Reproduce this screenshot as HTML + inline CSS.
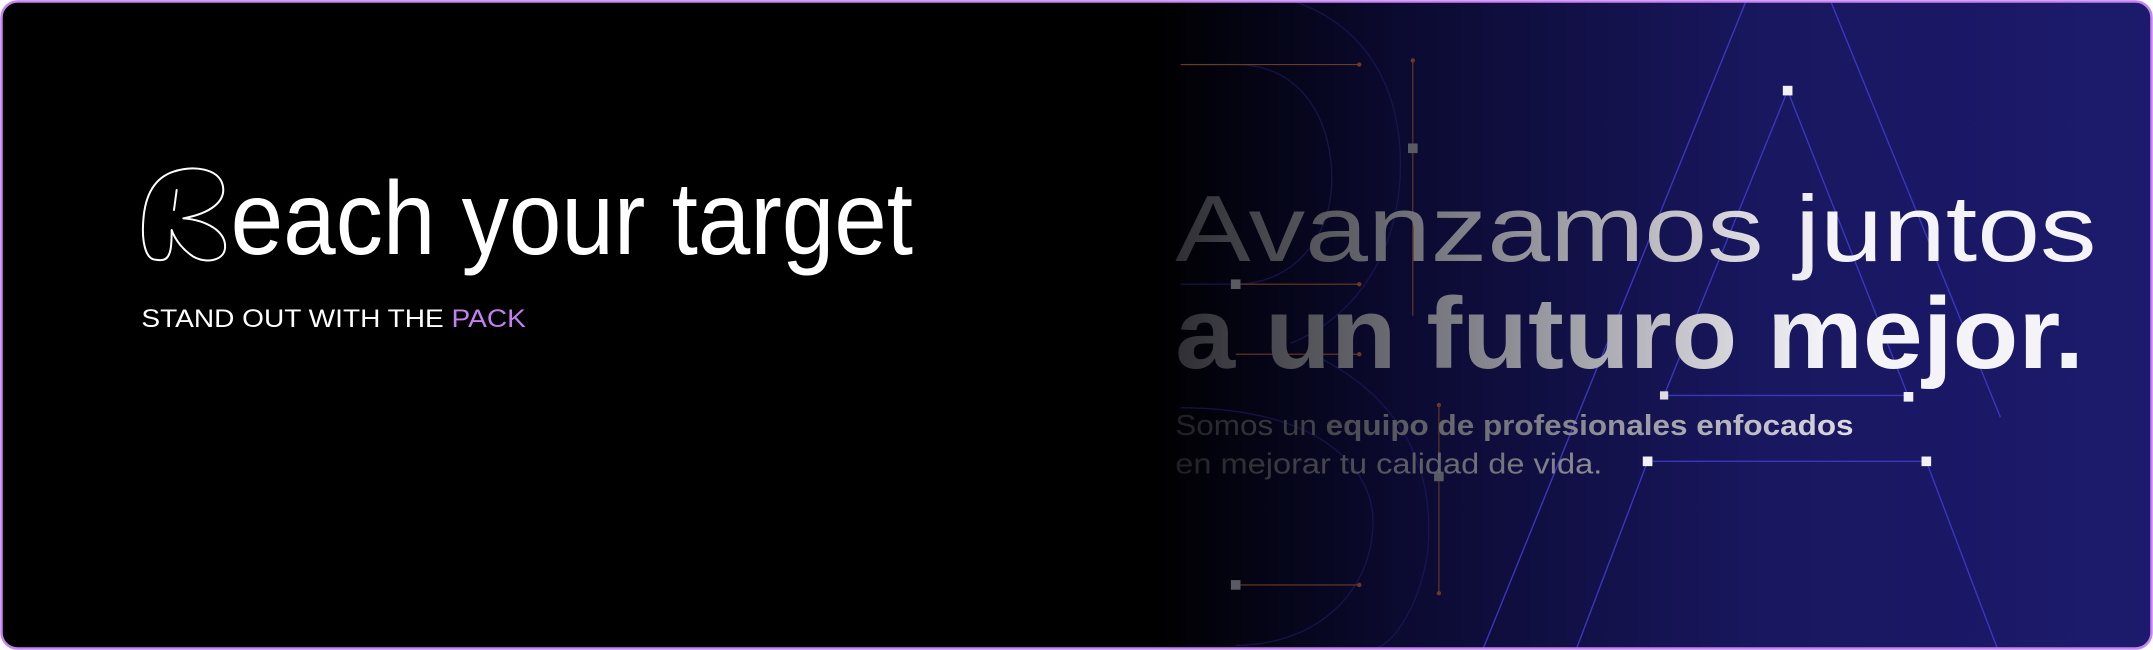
<!DOCTYPE html>
<html><head><meta charset="utf-8"><style>
html,body{margin:0;padding:0;background:#fff;width:2153px;height:650px;overflow:hidden}
svg{display:block}
</style></head><body>
<svg width="2153" height="650" viewBox="0 0 2153 650" xmlns="http://www.w3.org/2000/svg">
<defs>
<linearGradient id="bg" x1="0" x2="2153" y1="0" y2="0" gradientUnits="userSpaceOnUse">
<stop offset="0" stop-color="#000"/>
<stop offset="0.535" stop-color="#000"/>
<stop offset="0.65" stop-color="#0b0a30"/>
<stop offset="0.82" stop-color="#19175f"/>
<stop offset="1" stop-color="#1c1a6c"/>
</linearGradient>
<linearGradient id="tg" x1="856" x2="1330" y1="0" y2="0" gradientUnits="userSpaceOnUse">
<stop offset="0" stop-color="#2e2e34"/>
<stop offset="0.5" stop-color="#8a8a92"/>
<stop offset="1" stop-color="#f4f4f8"/>
</linearGradient>
<linearGradient id="tg2" x1="856" x2="1350" y1="0" y2="0" gradientUnits="userSpaceOnUse">
<stop offset="0" stop-color="#1e1e24"/>
<stop offset="0.6" stop-color="#8a8a92"/>
<stop offset="1" stop-color="#dcdce2"/>
</linearGradient>
<clipPath id="cp"><rect x="1.5" y="1.5" width="2150" height="647" rx="16"/></clipPath>
</defs>
<rect x="1.5" y="1.5" width="2150" height="647" rx="16" fill="url(#bg)"/>
<g clip-path="url(#cp)">
<g transform="scale(1.373)">
 <g fill="none" stroke="#1c1a5c" stroke-width="1" opacity="0.7">
  <path d="M860,47 L900,47 C950,47 970,90 970,130 C970,175 940,207 900,207 L860,207"/>
  <path d="M940,0 C1000,20 1020,70 1020,120 C1020,180 990,230 940,250"/>
  <path d="M860,297 C960,297 1000,340 1000,380 C1000,430 960,470 900,470"/>
  <path d="M960,260 C1020,290 1045,340 1040,400 C1035,440 1015,470 1000,473"/>
 </g>
 <g stroke="#6a3a22" stroke-width="0.8" fill="#6a3a22">
  <line x1="860" y1="47" x2="990" y2="47"/><circle cx="990" cy="47" r="1.2"/>
  <line x1="900" y1="207" x2="990" y2="207"/><circle cx="990" cy="207" r="1.2"/>
  <line x1="900" y1="258" x2="990" y2="258"/><circle cx="990" cy="258" r="1.2"/>
  <line x1="900" y1="426" x2="990" y2="426"/><circle cx="990" cy="426" r="1.2"/>
  <line x1="1029" y1="44" x2="1029" y2="230"/><circle cx="1029" cy="44" r="1.2"/>
  <line x1="1048" y1="295" x2="1048" y2="432"/><circle cx="1048" cy="295" r="1.2"/><circle cx="1048" cy="432" r="1.2"/>
 </g>
 <g stroke="#3a36c0" stroke-width="1" fill="none">
  <line x1="1272" y1="0" x2="1080" y2="473"/>
  <line x1="1333" y1="0" x2="1457" y2="304"/>
  <line x1="1302" y1="66" x2="1212" y2="288"/>
  <line x1="1302" y1="66" x2="1390" y2="289"/>
  <line x1="1212" y1="288" x2="1390" y2="288"/>
  <line x1="1200" y1="336" x2="1403" y2="336"/>
  <line x1="1200" y1="336" x2="1148" y2="473"/>
  <line x1="1403" y1="336" x2="1455" y2="473"/>
 </g>
 <g fill="#f2f2f6">
  <rect x="1298.5" y="62.5" width="7" height="7"/>
  <rect x="1386.5" y="285.5" width="7" height="7"/>
  <rect x="1209" y="285" width="6" height="6" fill="#ddd"/>
  <rect x="1196.5" y="332.5" width="7" height="7"/>
  <rect x="1399.5" y="332.5" width="7" height="7"/>
 </g>
 <g fill="#5a5a62">
  <rect x="1025.5" y="104.5" width="7" height="7"/>
  <rect x="896.5" y="203.5" width="7" height="7"/>
  <rect x="1044.5" y="343.5" width="7" height="7"/>
  <rect x="896.5" y="422.5" width="7" height="7"/>
 </g>
 <text x="856" y="190" font-family="Liberation Sans, sans-serif" font-size="68" fill="url(#tg)" textLength="671" lengthAdjust="spacingAndGlyphs">Avanzamos juntos</text>
 <text x="856" y="268" font-family="Liberation Sans, sans-serif" font-weight="bold" font-size="74" fill="url(#tg)" textLength="662" lengthAdjust="spacingAndGlyphs">a un futuro mejor.</text>
 <text x="856" y="317" font-family="Liberation Sans, sans-serif" font-size="21" fill="url(#tg2)" textLength="494" lengthAdjust="spacingAndGlyphs">Somos un <tspan font-weight="bold">equipo de profesionales enfocados</tspan></text>
 <text x="856" y="345" font-family="Liberation Sans, sans-serif" font-size="21" fill="url(#tg2)" textLength="311" lengthAdjust="spacingAndGlyphs">en mejorar tu calidad de vida.</text>
 <text x="168" y="185" font-family="Liberation Sans, sans-serif" font-size="76" fill="#fff" textLength="497" lengthAdjust="spacingAndGlyphs">each your target</text>
 <text x="103" y="238" font-family="Liberation Sans, sans-serif" font-size="18.5" fill="#fff" textLength="280" lengthAdjust="spacingAndGlyphs">STAND OUT WITH THE <tspan fill="#c57ff0">PACK</tspan></text>
</g>
<g transform="translate(130,160) scale(0.3333)" fill="none" stroke="#fff" stroke-width="6" stroke-linejoin="round" stroke-linecap="round">
 <path d="M70,298 C45,290 35,240 40,180 C45,110 70,55 130,35 C190,15 265,25 278,75 C290,125 240,160 160,175 C230,180 290,215 285,265 C280,305 225,310 190,290 C160,270 135,240 125,210 C125,250 125,300 95,300 C85,301 78,300 70,298 Z"/>
 <path d="M140,90 L132,150"/>
</g>
</g>
<rect x="1.5" y="1.5" width="2150" height="647" rx="16" fill="none" stroke="#c682f2" stroke-width="2.5"/>
</svg>
</body></html>
